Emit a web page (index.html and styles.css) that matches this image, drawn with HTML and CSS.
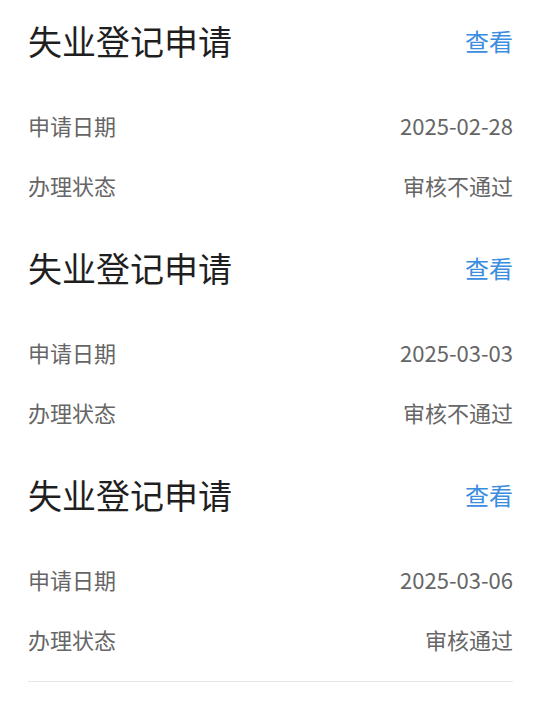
FILE: index.html
```html
<!DOCTYPE html>
<html lang="zh-CN">
<head>
<meta charset="utf-8">
<title>失业登记申请</title>
<link rel="stylesheet" href="styles.css">
</head>
<body>
<div class="list">
  <div class="card">
    <div class="card-head">
      <span class="title">失业登记申请</span>
      <span class="link">查看</span>
    </div>
    <div class="row"><span class="label">申请日期</span><span class="value">2025-02-28</span></div>
    <div class="row"><span class="label">办理状态</span><span class="value">审核不通过</span></div>
  </div>
  <div class="card">
    <div class="card-head">
      <span class="title">失业登记申请</span>
      <span class="link">查看</span>
    </div>
    <div class="row"><span class="label">申请日期</span><span class="value">2025-03-03</span></div>
    <div class="row"><span class="label">办理状态</span><span class="value">审核不通过</span></div>
  </div>
  <div class="card">
    <div class="card-head">
      <span class="title">失业登记申请</span>
      <span class="link">查看</span>
    </div>
    <div class="row"><span class="label">申请日期</span><span class="value">2025-03-06</span></div>
    <div class="row"><span class="label">办理状态</span><span class="value">审核通过</span></div>
  </div>
</div>
</body>
</html>
```

FILE: styles.css
```css
html, body {
  margin: 0;
  padding: 0;
  background: #ffffff;
}
body {
  font-family: "Noto Sans CJK SC", "Noto Sans", sans-serif;
  width: 540px;
  height: 720px;
  overflow: hidden;
}
.list {
  margin: 0 27px 0 28px;
  border-bottom: 1px solid #e6e6e6;
}
.card {
  display: flex;
  flex-direction: column;
  padding-bottom: 12px;
}
.card-head {
  height: 81px;
  display: flex;
  align-items: center;
  justify-content: space-between;
  margin-bottom: 14px;
}
.title {
  font-size: 34px;
  line-height: 40px;
  color: #1f1f1f;
}
.link {
  font-size: 24px;
  line-height: 30px;
  color: #3b8de0;
}
.row {
  height: 60px;
  display: flex;
  align-items: center;
  justify-content: space-between;
}
.label, .value {
  font-size: 22px;
  line-height: 30px;
  color: #666666;
}
```
